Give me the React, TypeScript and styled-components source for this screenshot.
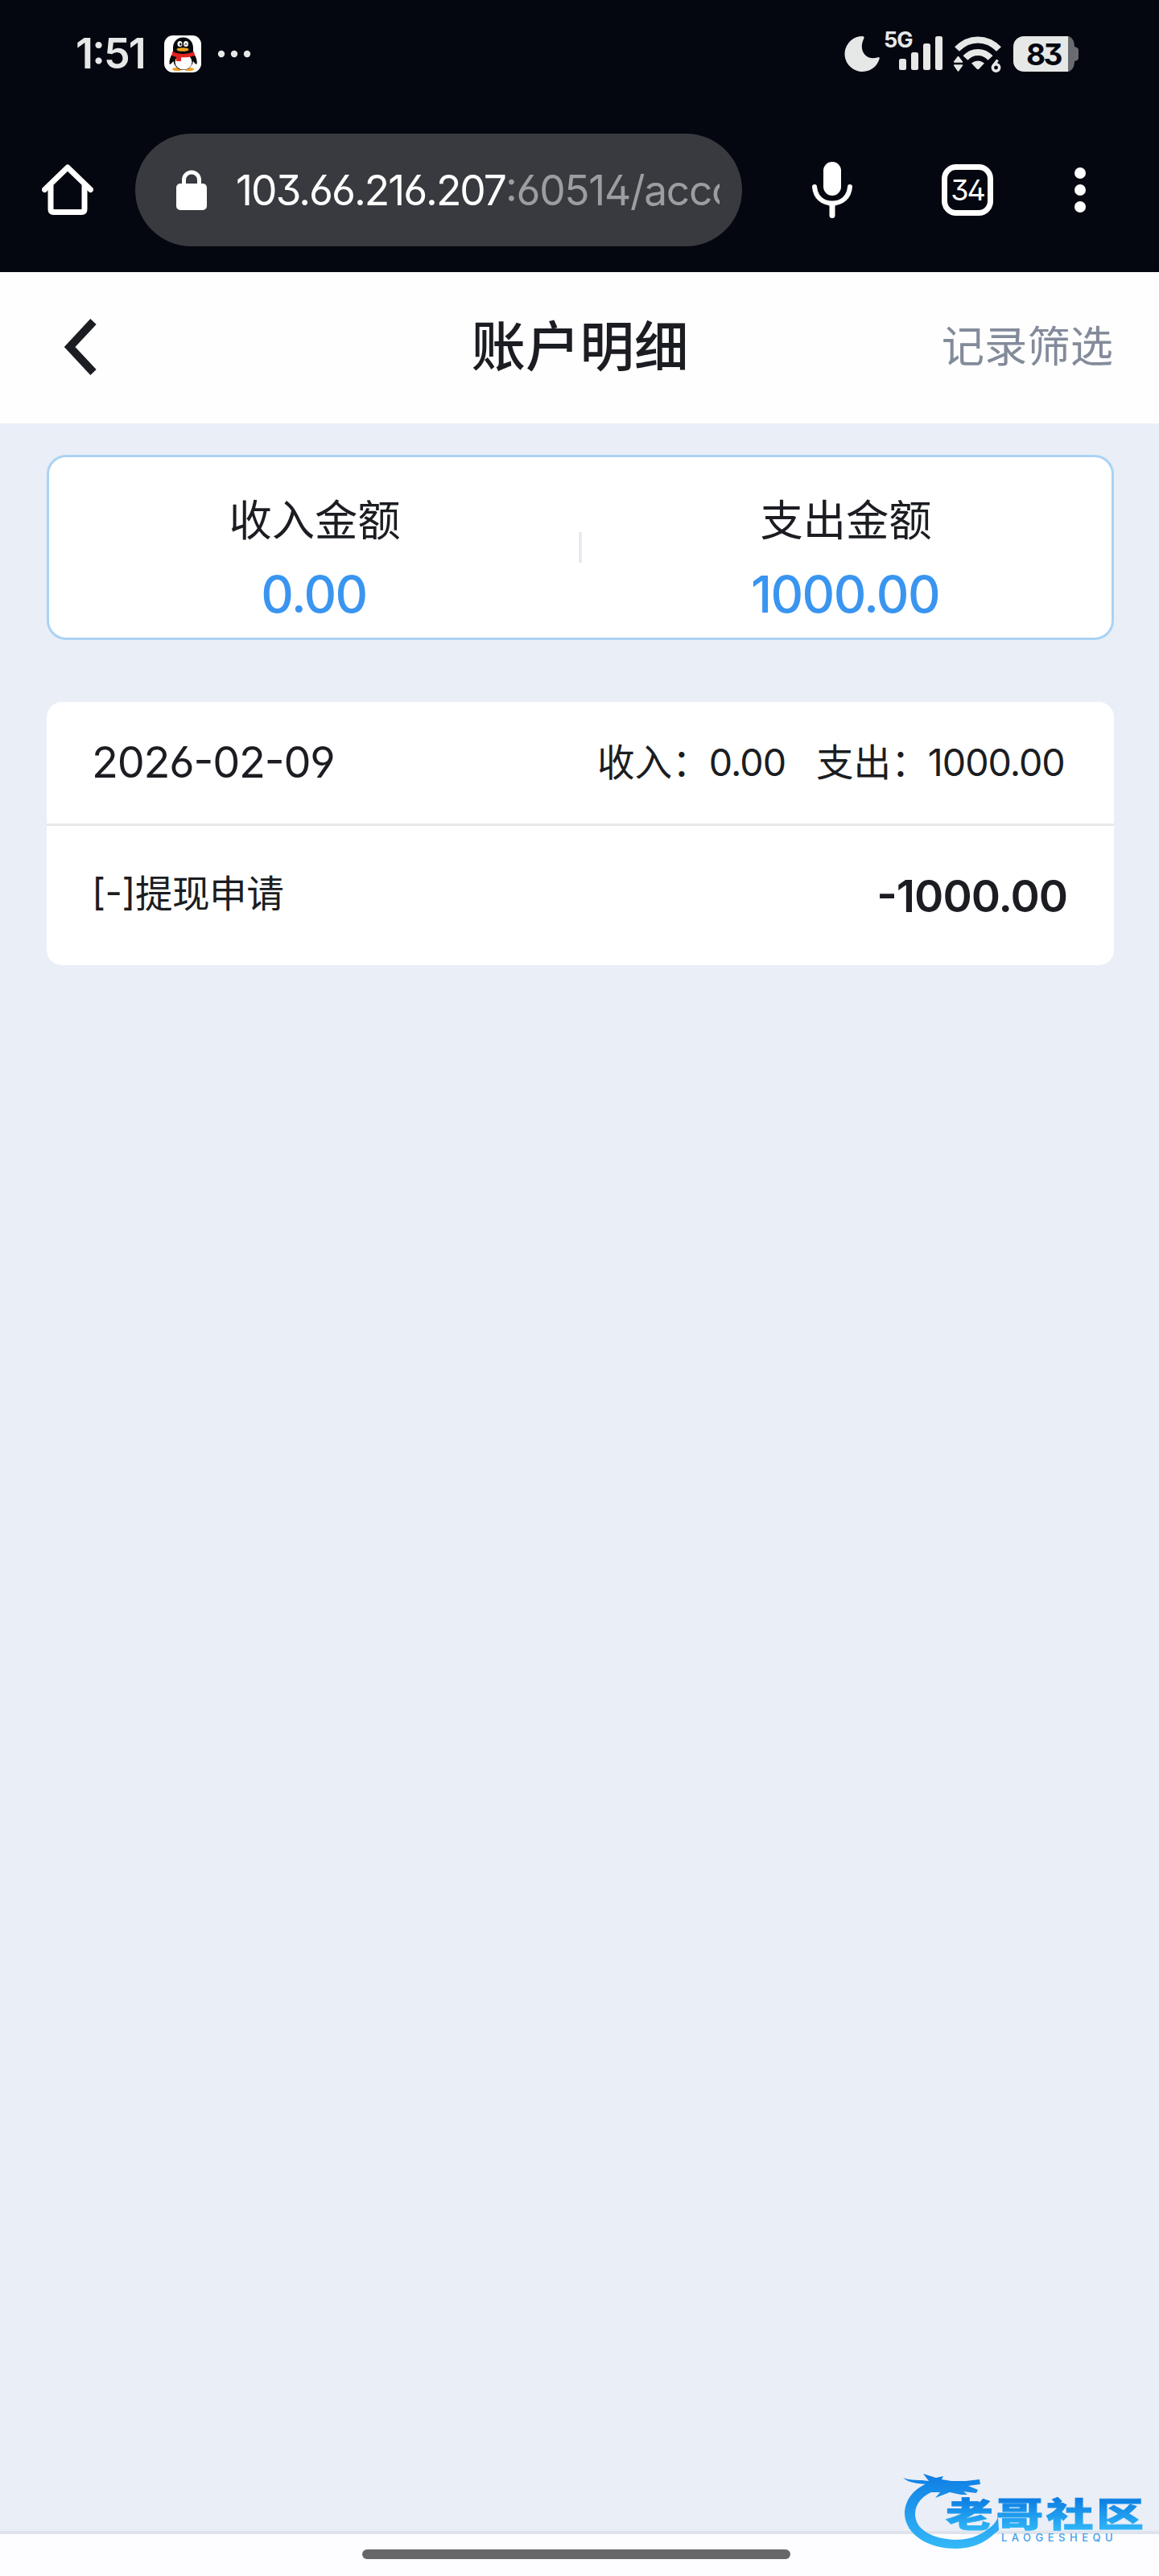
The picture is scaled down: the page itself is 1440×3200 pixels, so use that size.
import styled, { createGlobalStyle } from 'styled-components'

const summary = [
  { label: '收入金额', value: '0.00' },
  { label: '支出金额', value: '1000.00' },
]

const records = [
  {
    date: '2026-02-09',
    income: '0.00',
    expense: '1000.00',
    items: [{ name: '[-]提现申请', amount: '-1000.00' }],
  },
]

export default function App() {
  return (
    <Screen>
      <GlobalStyle />
      <StatusBar>
        <Clock>1:51</Clock>
        <PenguinIcon />
        <MoreIcon />
        <StatusRight>
          <MoonIcon />
          <Signal>
            <Network>5G</Network>
            <BarsIcon />
          </Signal>
          <WifiIcon />
          <Battery>
            <Level>83</Level>
            <BatteryCap />
          </Battery>
        </StatusRight>
      </StatusBar>

      <BrowserBar>
        <HomeIcon />
        <AddressBar>
          <LockIcon />
          <Url>
            103.66.216.207<span>:60514/acco</span>
          </Url>
        </AddressBar>
        <MicIcon />
        <TabCount>34</TabCount>
        <DotsIcon />
      </BrowserBar>

      <PageHeader>
        <BackIcon />
        <Title>账户明细</Title>
        <FilterLink>记录筛选</FilterLink>
      </PageHeader>

      <Content>
        <SummaryCard>
          {summary.map((item) => (
            <SummaryItem key={item.label}>
              <h4>{item.label}</h4>
              <p>{item.value}</p>
            </SummaryItem>
          ))}
        </SummaryCard>

        {records.map((record) => (
          <RecordCard key={record.date}>
            <RecordHead>
              <RecordDate>{record.date}</RecordDate>
              <Total $width={272}>
                收入：<b>{record.income}</b>
              </Total>
              <Total $width={311}>
                支出：<b>{record.expense}</b>
              </Total>
            </RecordHead>
            {record.items.map((item) => (
              <RecordRow key={item.name}>
                <RecordName>{item.name}</RecordName>
                <Amount>{item.amount}</Amount>
              </RecordRow>
            ))}
          </RecordCard>
        ))}
      </Content>

      <BottomBar>
        <Handle />
      </BottomBar>
      <CommunityLogo />
    </Screen>
  )
}

const GlobalStyle = createGlobalStyle`
  * {
    box-sizing: border-box;
    margin: 0;
    padding: 0;
  }

  body {
    font-family: Inter, 'Noto Sans CJK SC', sans-serif;
    font-feature-settings: 'ss01', 'case';
    color: #1b1d22;
  }

  svg {
    display: block;
    flex: none;
  }
`

const Screen = styled.div`
  position: relative;
  display: flex;
  flex-direction: column;
  width: 1440px;
  height: 3200px;
  background: #eaeef7;
  overflow: hidden;
  white-space: nowrap;
`

const StatusBar = styled.div`
  display: flex;
  align-items: center;
  height: 134px;
  padding: 0 100px 0 94px;
  background: #04070f;
  color: #e6e8e8;
`

const Clock = styled.div`
  width: 110px;
  font-size: 52px;
  font-weight: 600;
  line-height: 60px;
  letter-spacing: -1.8px;
`

const StatusRight = styled.div`
  display: flex;
  align-items: center;
  margin-left: auto;
`

const Signal = styled.div`
  position: relative;
  width: 74px;
  height: 46px;
  margin-left: 4px;
  margin-right: 13px;
`

const Network = styled.span`
  position: absolute;
  left: 0;
  top: -9px;
  font-size: 27px;
  font-weight: 700;
  line-height: 30px;
  letter-spacing: -1px;
`

const Battery = styled.div`
  display: flex;
  align-items: center;
  margin-left: 15px;
`

const Level = styled.div`
  width: 68px;
  height: 44px;
  padding-left: 16px;
  border-radius: 13px 0 0 13px;
  background: #e6e8e8;
  color: #04070f;
  font-size: 37px;
  font-weight: 700;
  line-height: 45px;
  letter-spacing: -2.5px;
`

const BrowserBar = styled.div`
  display: flex;
  align-items: center;
  height: 204px;
  padding-left: 52px;
  background: #04070f;
  color: #fff;
`

const AddressBar = styled.div`
  display: flex;
  align-items: center;
  width: 754px;
  height: 140px;
  margin-left: 52px;
  margin-right: 87px;
  padding-left: 51px;
  border-radius: 70px;
  background: #393a3f;
`

const Url = styled.div`
  width: 601px;
  margin-left: 36px;
  overflow: hidden;
  font-size: 51.5px;
  line-height: 80px;
  letter-spacing: -2px;

  span {
    color: #9c9da0;
    letter-spacing: -1.3px;
  }
`

const TabCount = styled.div`
  width: 64px;
  height: 64px;
  margin-left: 111px;
  margin-right: 101px;
  border: 7px solid #fff;
  border-radius: 18px;
  font-size: 36px;
  line-height: 50px;
  letter-spacing: -2px;
  text-align: center;
`

const PageHeader = styled.div`
  display: grid;
  grid-template-columns: 1fr auto 1fr;
  align-items: center;
  height: 188px;
  padding: 0 57px 3px 80px;
  background: #fefefe;
`

const Title = styled.h1`
  margin-right: 22px;
  font-size: 67.5px;
  font-weight: 500;
  line-height: 80px;
`

const FilterLink = styled.span`
  justify-self: end;
  color: #838b9b;
  font-size: 53.3px;
  line-height: 64px;
`

const Content = styled.div`
  flex: 1;
  padding: 39px 56px 0 58px;
`

const SummaryCard = styled.div`
  display: flex;
  height: 230px;
  border: 3px solid #aad3f4;
  border-radius: 24px;
  background: #fff;
`

const SummaryItem = styled.div`
  position: relative;
  flex: 1;
  padding-top: 45px;
  text-align: center;

  h4 {
    font-size: 53.3px;
    font-weight: 400;
    line-height: 68px;
  }

  p {
    margin-top: 19px;
    margin-right: 2px;
    color: #3a95f0;
    font-size: 63px;
    font-weight: 500;
    line-height: 76px;
    letter-spacing: -1.6px;
  }

  & + &::before {
    content: '';
    position: absolute;
    left: -2px;
    top: 93px;
    width: 4px;
    height: 38px;
    background: #e8eaf2;
  }
`

const RecordCard = styled.div`
  margin-top: 77px;
  border-radius: 19px;
  background: #fff;
`

const RecordHead = styled.div`
  display: flex;
  align-items: center;
  height: 154px;
  padding: 0 59px 2px 56px;
  border-bottom: 3px solid #e8e8e8;
`

const RecordDate = styled.div`
  flex: 1;
  font-size: 54px;
  line-height: 64px;
  letter-spacing: -1.2px;
`

const Total = styled.div<{ $width: number }>`
  width: ${(p) => p.$width}px;
  font-size: 46.6px;
  line-height: 60px;

  b {
    margin-left: -1px;
    font-weight: 400;
    letter-spacing: -1px;
  }
`

const RecordRow = styled.div`
  display: flex;
  align-items: center;
  justify-content: space-between;
  height: 173px;
  padding: 0 58px 0 56px;
`

const RecordName = styled.span`
  padding-bottom: 5px;
  font-size: 46.6px;
  line-height: 60px;
  letter-spacing: -0.5px;
`

const Amount = styled.span`
  font-size: 55px;
  font-weight: 600;
  line-height: 68px;
  letter-spacing: -1px;
`

const BottomBar = styled.div`
  height: 56px;
  padding: 19px 0 0 450px;
  border-top: 4px solid #dfe3ec;
  background: #fdfdff;
`

const Handle = styled.div`
  width: 532px;
  height: 12px;
  border-radius: 6px;
  background: #67676a;
`

const LogoSvg = styled.svg`
  position: absolute;
  left: 1110px;
  top: 3056px;
`

const PenguinIcon = () => (
  <svg width="46" height="46" viewBox="0 0 46 46">
    <rect width="46" height="46" rx="11" fill="#fff" />
    <ellipse cx="16" cy="42" rx="6" ry="2.200" fill="#f0a020" />
    <ellipse cx="31" cy="42" rx="6" ry="2.200" fill="#f0a020" />
    <path
      d="M23.500 2.500c-8 0-12.500 6-12.500 13v6c-3 4-5 9-4.500 14 1.500 1 3-1.500 5-3.500 1 6 5.500 11 12 11s11.500-5 12.500-11c1.500 2 3.500 4.500 4.500 3.500 1-5-1.500-10-4.500-14v-6c0-7-4.500-13-12.500-13z"
      fill="#07080a"
    />
    <ellipse cx="24" cy="33" rx="10.500" ry="9.500" fill="#fff" />
    <path d="M10 20c8 4 19 4 27 0l1 5c-5 2-11 2.500-17 2.200V32h-6v-5.500c-2 0-4-.7-5.500-1.500z" fill="#e32222" />
    <ellipse cx="19.500" cy="10.500" rx="3" ry="3.600" fill="#fff" />
    <ellipse cx="27" cy="10.500" rx="3" ry="3.600" fill="#fff" />
    <ellipse cx="20.300" cy="11" rx="1.200" ry="1.800" fill="#111" />
    <path d="M25.500 11.500c.5-1.500 2.500-1.500 3 0" fill="none" stroke="#111" />
    <ellipse cx="23" cy="17.500" rx="7.500" ry="2.300" fill="#f0a020" />
  </svg>
)

const MoreIcon = () => (
  <svg width="62" height="20" viewBox="0 0 62 20" fill="#e6e8e8">
    <circle cx="25" cy="10" r="4.200" />
    <circle cx="41" cy="10" r="4.200" />
    <circle cx="57" cy="10" r="4.200" />
  </svg>
)

const MoonIcon = () => (
  <svg width="45" height="46" viewBox="0 0 45 46" fill="#e6e8e8">
    <path d="M23 1A22 22 0 1 0 43.800 28.500Q43.500 26.300 41 27.500C28 31.500 17 20 24 4.500Q25.500 1.300 23 1z" />
  </svg>
)

const BarsIcon = () => (
  <svg width="74" height="46" viewBox="0 0 74 46" fill="#e6e8e8">
    <rect x="19" y="29" width="9" height="14" rx="2.500" />
    <rect x="34" y="21" width="9" height="22" rx="2.500" />
    <rect x="49" y="10" width="9" height="33" rx="2.500" />
    <rect x="64" y="1" width="9" height="42" rx="2.500" />
  </svg>
)

const WifiIcon = () => (
  <svg width="59" height="46" viewBox="0 0 59 46" fill="none" stroke="#e6e8e8">
    <path d="M4 17C19 1.500 41 1.500 56 17" strokeWidth="8" />
    <path d="M14.500 28C23 18.500 37 18.500 45.500 28" strokeWidth="8" />
    <path d="M22 34.500Q30 28.500 38 34.500L31.500 41.500Q30 43 28.500 41.500z" fill="#e6e8e8" stroke="none" />
    <path d="M.5 33L5.500 26.500L10.500 33zM.5 37L5.500 44L10.500 37z" fill="#e6e8e8" strokeWidth="1.500" strokeLinejoin="round" />
    <circle cx="52.500" cy="40" r="4.200" strokeWidth="3.500" />
    <path d="M54.500 30.500L49.300 37.500" strokeWidth="3.500" />
  </svg>
)

const BatteryCap = () => (
  <svg width="13" height="44" viewBox="0 0 13 44" fill="#6a6b70">
    <path d="M0 0C5 1 8 6 8 13Q13 14 13 17V27Q13 30 8 31C8 38 5 43 0 44z" />
  </svg>
)

const HomeIcon = () => (
  <svg width="64" height="64" viewBox="0 0 64 64" fill="none" stroke="#fff" strokeWidth="7">
    <path d="M3.500 31.500L32 4L60.500 31.500" strokeLinecap="round" strokeLinejoin="round" />
    <path d="M11 26V56Q11 59.500 14.500 59.500H49.500Q53 59.500 53 56V26" />
  </svg>
)

const LockIcon = () => (
  <svg width="38" height="50" viewBox="0 0 38 50">
    <path d="M9.500 18V12.500a9.500 9.500 0 0 1 19 0V18" fill="none" stroke="#fff" strokeWidth="5" />
    <rect y="17" width="38" height="33" rx="5" fill="#fff" />
  </svg>
)

const MicIcon = () => (
  <svg width="50" height="70" viewBox="0 0 50 70" fill="none" stroke="#fff" strokeLinecap="round">
    <rect x="14" y="0" width="22" height="42" rx="11" fill="#fff" stroke="none" />
    <path d="M3 31C4 44 13 51.500 25 51.500S46 44 47 31" strokeWidth="6" />
    <path d="M25 53V66.500" strokeWidth="7" />
  </svg>
)

const DotsIcon = () => (
  <svg width="14" height="56" viewBox="0 0 14 56" fill="#fff">
    <circle cx="7" cy="7" r="7" />
    <circle cx="7" cy="28" r="7" />
    <circle cx="7" cy="49" r="7" />
  </svg>
)

const BackIcon = () => (
  <svg width="40" height="70" viewBox="0 0 40 70" fill="none" stroke="#1b1d22" strokeWidth="10">
    <path d="M36 3.500L6.500 35L36 66.500" />
  </svg>
)

const CommunityLogo = () => (
  <LogoSvg width="320" height="120" viewBox="0 0 320 120">
    <defs>
      <linearGradient id="ring" x1="0" y1="18" x2="0" y2="110" gradientUnits="userSpaceOnUse">
        <stop offset="0" stopColor="#0f7ee4" />
        <stop offset="1" stopColor="#35b9f8" />
      </linearGradient>
      <linearGradient id="name" x1="0" y1="-36" x2="0" y2="4" gradientUnits="userSpaceOnUse">
        <stop offset="0" stopColor="#0c7ce2" />
        <stop offset="1" stopColor="#2fb6f7" />
      </linearGradient>
    </defs>
    <g fill="url(#ring)">
      <path d="M47 27C26 34 14 49 14 67C15 93 44 110 77 110C94 110 108 105 119 97L131 87L130 71C127 78 123 82 117 86C106 95 92 99 77 99C48 98 27 86 27 67C27 54 36 43 54 37L64 30z" />
      <path d="M12 22C22 26 32 24 44 26L37 17L53 22L62 20L60 24L72 26L90 26L107 24L108 30L93 32L105 37L103 41L87 39L92 43L84 43L70 40L52 47L58 40L46 40L50 32C38 28 22 31 12 22z" />
    </g>
    <g transform="translate(65 83) scale(1.4 1)">
      <text
        fontFamily="'Noto Sans CJK SC', sans-serif"
        fontSize="42"
        fontWeight="900"
        letterSpacing="2.600"
        fill="url(#name)"
        stroke="url(#name)"
        strokeWidth="0.800"
      >
        老哥社区
      </text>
    </g>
    <text x="134" y="100.500" fontFamily="Inter, sans-serif" fontSize="13" fontWeight="500" letterSpacing="5.500" fill="#3f9fe8">
      LAOGESHEQU
    </text>
  </LogoSvg>
)
